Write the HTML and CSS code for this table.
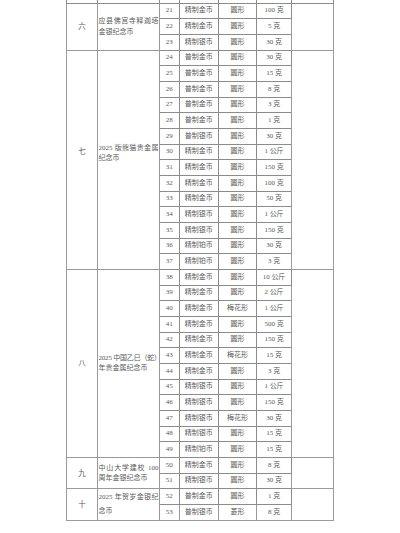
FILE: index.html
```html
<!DOCTYPE html>
<html lang="zh-CN">
<head>
<meta charset="utf-8">
<link rel="stylesheet" href="styles.css">
</head>
<body>
<div class="page">
<table class="coins">
<colgroup>
<col class="c-grp"><col class="c-name"><col class="c-no"><col class="c-type"><col class="c-shape"><col class="c-wt"><col class="c-note">
</colgroup>
<tbody>
<tr class="stub"><td></td><td></td><td></td><td></td><td></td><td></td><td></td></tr>

<tr><td class="grp" rowspan="3">六</td><td class="name" rowspan="3"><span class="ln full">应县佛宫寺释迦塔</span><span class="ln">金银纪念币</span></td><td class="no">21</td><td>精制金币</td><td>圆形</td><td>100 克</td><td class="note" rowspan="3"></td></tr>
<tr><td class="no">22</td><td>精制金币</td><td>圆形</td><td>5 克</td></tr>
<tr><td class="no">23</td><td>精制银币</td><td>圆形</td><td>30 克</td></tr>

<tr><td class="grp up" rowspan="14">七</td><td class="name up" rowspan="14"><span class="ln full">2025 版熊猫贵金属</span><span class="ln">纪念币</span></td><td class="no">24</td><td>普制金币</td><td>圆形</td><td>30 克</td><td class="note" rowspan="14"></td></tr>
<tr><td class="no">25</td><td>普制金币</td><td>圆形</td><td>15 克</td></tr>
<tr><td class="no">26</td><td>普制金币</td><td>圆形</td><td>8 克</td></tr>
<tr><td class="no">27</td><td>普制金币</td><td>圆形</td><td>3 克</td></tr>
<tr><td class="no">28</td><td>普制金币</td><td>圆形</td><td>1 克</td></tr>
<tr><td class="no">29</td><td>普制银币</td><td>圆形</td><td>30 克</td></tr>
<tr><td class="no">30</td><td>精制金币</td><td>圆形</td><td>1 公斤</td></tr>
<tr><td class="no">31</td><td>精制金币</td><td>圆形</td><td>150 克</td></tr>
<tr><td class="no">32</td><td>精制金币</td><td>圆形</td><td>100 克</td></tr>
<tr><td class="no">33</td><td>精制金币</td><td>圆形</td><td>50 克</td></tr>
<tr><td class="no">34</td><td>精制银币</td><td>圆形</td><td>1 公斤</td></tr>
<tr><td class="no">35</td><td>精制银币</td><td>圆形</td><td>150 克</td></tr>
<tr><td class="no">36</td><td>精制铂币</td><td>圆形</td><td>30 克</td></tr>
<tr><td class="no">37</td><td>精制铂币</td><td>圆形</td><td>3 克</td></tr>

<tr><td class="grp" rowspan="12">八</td><td class="name" rowspan="12"><span class="ln cut">2025 中国乙巳（蛇）</span><span class="ln">年贵金属纪念币</span></td><td class="no">38</td><td>精制金币</td><td>圆形</td><td>10 公斤</td><td class="note" rowspan="12"></td></tr>
<tr><td class="no">39</td><td>精制金币</td><td>圆形</td><td>2 公斤</td></tr>
<tr><td class="no">40</td><td>精制金币</td><td>梅花形</td><td>1 公斤</td></tr>
<tr><td class="no">41</td><td>精制金币</td><td>圆形</td><td>500 克</td></tr>
<tr><td class="no">42</td><td>精制金币</td><td>圆形</td><td>150 克</td></tr>
<tr><td class="no">43</td><td>精制金币</td><td>梅花形</td><td>15 克</td></tr>
<tr><td class="no">44</td><td>精制金币</td><td>圆形</td><td>3 克</td></tr>
<tr><td class="no">45</td><td>精制银币</td><td>圆形</td><td>1 公斤</td></tr>
<tr><td class="no">46</td><td>精制银币</td><td>圆形</td><td>150 克</td></tr>
<tr><td class="no">47</td><td>精制银币</td><td>梅花形</td><td>30 克</td></tr>
<tr><td class="no">48</td><td>精制银币</td><td>圆形</td><td>15 克</td></tr>
<tr><td class="no">49</td><td>精制铂币</td><td>圆形</td><td>15 克</td></tr>

<tr><td class="grp" rowspan="2">九</td><td class="name" rowspan="2"><span class="ln full">中山大学建校 100</span><span class="ln">周年金银纪念币</span></td><td class="no">50</td><td>精制金币</td><td>圆形</td><td>8 克</td><td class="note" rowspan="2"></td></tr>
<tr><td class="no">51</td><td>精制银币</td><td>圆形</td><td>30 克</td></tr>

<tr><td class="grp" rowspan="2">十</td><td class="name wide" rowspan="2"><span class="ln full">2025 年贺岁金银纪</span><span class="ln">念币</span></td><td class="no">52</td><td>普制金币</td><td>圆形</td><td>1 克</td><td class="note" rowspan="2"></td></tr>
<tr><td class="no">53</td><td>普制银币</td><td>菱形</td><td>8 克</td></tr>
</tbody>
</table>
</div>
</body>
</html>
```

FILE: styles.css
```css
html, body {
  margin: 0;
  padding: 0;
  background: #ffffff;
}

.page {
  padding-left: 66px;
}

.coins {
  border-collapse: collapse;
  table-layout: fixed;
  width: 267px;
  font-family: "Liberation Serif", "Noto Sans CJK SC", serif;
  font-size: 7px;
  color: #5a5a5a;
}

.c-grp { width: 31px; }
.c-name { width: 62px; }
.c-no { width: 19.5px; }
.c-type { width: 39.5px; }
.c-shape { width: 38px; }
.c-wt { width: 35px; }
.c-note { width: 42px; }

.coins td {
  border: 1px solid #8c8c8c;
  padding: 0;
  height: 14.68px;
  line-height: 9px;
  text-align: center;
  vertical-align: middle;
  white-space: nowrap;
}

.coins tr:last-child td,
.coins .grp,
.coins .name,
.coins .note {
  border-color: #9a9a9a;
}

.coins .stub td {
  height: 2.5px;
  border-top: 0;
  line-height: 0;
  font-size: 0;
}

.coins .grp {
  font-size: 7.5px;
}

.coins .name {
  text-align: left;
  white-space: normal;
  padding: 0 0.5px;
  line-height: 10.5px;
}

.coins .name.up {
  padding-bottom: 13px;
}

.coins .grp.up {
  padding-bottom: 16px;
}

.coins .name.wide {
  line-height: 13.5px;
}

.ln {
  display: block;
  white-space: nowrap;
}

.ln.full {
  text-align: justify;
  text-align-last: justify;
  white-space: normal;
}

.ln.cut {
  letter-spacing: -0.2px;
}
```
